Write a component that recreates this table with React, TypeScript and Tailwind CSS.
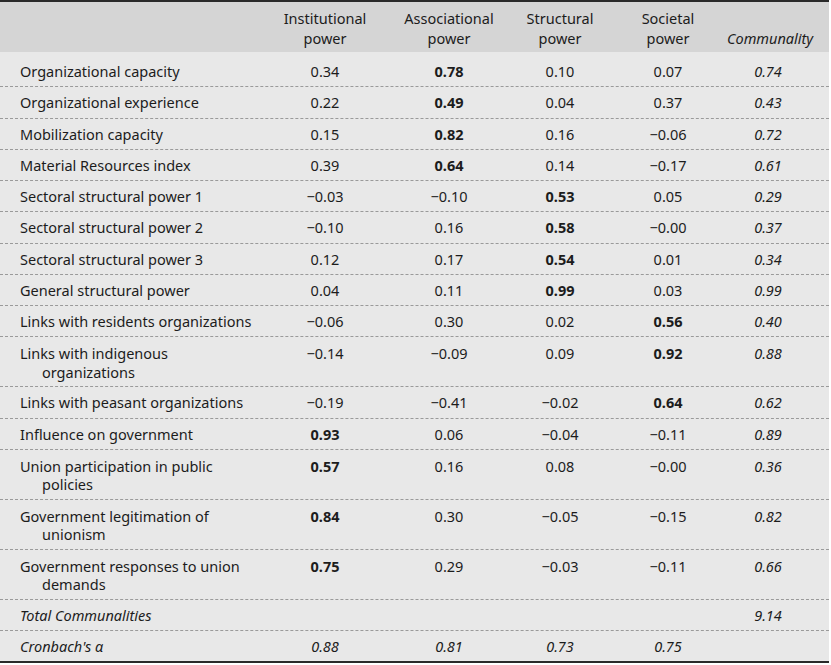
import React from "react"

type Row = {
  label: React.ReactNode
  values: string[]
  bold?: number
  communality: string
}

const rows: Row[] = [
  { label: "Organizational capacity", values: ["0.34", "0.78", "0.10", "0.07"], bold: 1, communality: "0.74" },
  { label: "Organizational experience", values: ["0.22", "0.49", "0.04", "0.37"], bold: 1, communality: "0.43" },
  { label: "Mobilization capacity", values: ["0.15", "0.82", "0.16", "−0.06"], bold: 1, communality: "0.72" },
  { label: "Material Resources index", values: ["0.39", "0.64", "0.14", "−0.17"], bold: 1, communality: "0.61" },
  { label: "Sectoral structural power 1", values: ["−0.03", "−0.10", "0.53", "0.05"], bold: 2, communality: "0.29" },
  { label: "Sectoral structural power 2", values: ["−0.10", "0.16", "0.58", "−0.00"], bold: 2, communality: "0.37" },
  { label: "Sectoral structural power 3", values: ["0.12", "0.17", "0.54", "0.01"], bold: 2, communality: "0.34" },
  { label: "General structural power", values: ["0.04", "0.11", "0.99", "0.03"], bold: 2, communality: "0.99" },
  { label: "Links with residents organizations", values: ["−0.06", "0.30", "0.02", "0.56"], bold: 3, communality: "0.40" },
  { label: ["Links with indigenous", "organizations"], values: ["−0.14", "−0.09", "0.09", "0.92"], bold: 3, communality: "0.88" },
  { label: "Links with peasant organizations", values: ["−0.19", "−0.41", "−0.02", "0.64"], bold: 3, communality: "0.62" },
  { label: "Influence on government", values: ["0.93", "0.06", "−0.04", "−0.11"], bold: 0, communality: "0.89" },
  { label: ["Union participation in public", "policies"], values: ["0.57", "0.16", "0.08", "−0.00"], bold: 0, communality: "0.36" },
  { label: ["Government legitimation of", "unionism"], values: ["0.84", "0.30", "−0.05", "−0.15"], bold: 0, communality: "0.82" },
  { label: ["Government responses to union", "demands"], values: ["0.75", "0.29", "−0.03", "−0.11"], bold: 0, communality: "0.66" },
]

const grid = "grid grid-cols-[263px_124px_124px_98px_118px_82px] pr-[20px]"
const line = "border-b border-dashed border-[#9a9a9a]"

function Label({ label }: { label: React.ReactNode }) {
  if (Array.isArray(label)) {
    return (
      <div className="pl-[20px] whitespace-nowrap">
        <div>{label[0]}</div>
        <div className="pl-[22px]">{label[1]}</div>
      </div>
    )
  }
  return <div className="pl-[20px] whitespace-nowrap">{label}</div>
}

export default function App() {
  return (
    <div className="min-h-screen bg-white">
      <div
        className="w-[829px] text-[14.5px] text-[#1c1c1c]"
        style={{ fontFamily: "'Noto Sans', 'Open Sans', sans-serif" }}
      >
        <div className="border-t-2 border-[#2a2a2a] bg-[#d5d5d5]">
          <div className={`${grid} h-[50px] items-end pb-[4px] leading-[20px] text-center`}>
            <div />
            <div>Institutional<br />power</div>
            <div>Associational<br />power</div>
            <div>Structural<br />power</div>
            <div>Societal<br />power</div>
            <div className="italic">Communality</div>
          </div>
        </div>
        <div className="bg-[#e8e8e8] pt-[4px] border-b-2 border-[#2a2a2a]">
          {rows.map((r, i) => (
            <div
              key={i}
              className={`${grid} leading-[18.25px] ${line} ${
                Array.isArray(r.label) ? "pt-[7px] pb-[5.5px]" : "py-[6px]"
              }`}
            >
              <Label label={r.label} />
              {r.values.map((v, j) => (
                <div key={j} className={`text-center ${r.bold === j ? "font-bold" : ""}`}>
                  {v}
                </div>
              ))}
              <div className="text-center italic">{r.communality}</div>
            </div>
          ))}
          <div className={`${grid} py-[6px] leading-[18.25px] ${line}`}>
            <div className="pl-[20px] italic">Total Communalities</div>
            <div />
            <div />
            <div />
            <div />
            <div className="text-center italic">9.14</div>
          </div>
          <div className={`${grid} py-[6px] leading-[18.25px] italic`}>
            <div className="pl-[20px]">Cronbach's α</div>
            <div className="text-center">0.88</div>
            <div className="text-center">0.81</div>
            <div className="text-center">0.73</div>
            <div className="text-center">0.75</div>
            <div />
          </div>
        </div>
      </div>
    </div>
  )
}
